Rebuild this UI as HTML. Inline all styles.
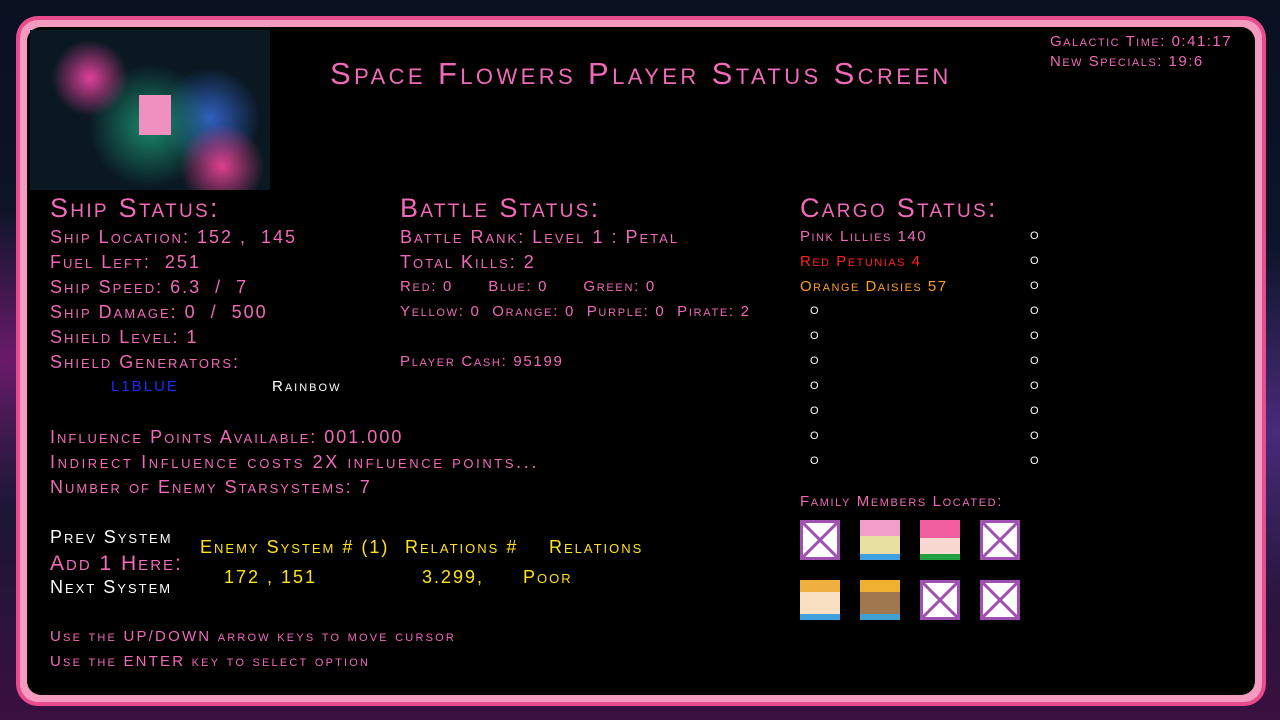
<!DOCTYPE html>
<html><head><meta charset="utf-8"><style>
body{margin:0;width:1280px;height:720px;overflow:hidden;background:radial-gradient(ellipse at 0% 50%,#6a1a6a 0,transparent 30%),radial-gradient(ellipse at 100% 60%,#4a2a7a 0,transparent 30%),linear-gradient(180deg,#0a1020,#101830 60%,#3a1040);font-family:"Liberation Sans",sans-serif;font-variant:small-caps;position:relative}
#frame{position:absolute;left:16px;top:16px;width:1250px;height:690px;border-radius:22px;background:#e84c8c}
#frame2{position:absolute;left:20px;top:20px;width:1242px;height:682px;border-radius:18px;background:#f59ac0}
#panel{position:absolute;left:27px;top:27px;width:1228px;height:668px;border-radius:14px;background:#000}
.t{position:absolute;white-space:nowrap;color:#f06ab8;font-size:18px;line-height:20px;letter-spacing:2px}
.h{font-size:27px;line-height:30px;letter-spacing:2.3px}
.s{font-size:15px;letter-spacing:2px}
.y{color:#ffe21a}
.w{color:#fff}
.o{position:absolute;color:#fff;font-size:15px;line-height:20px}
.box{position:absolute;width:34px;height:34px;border:3px solid #a050b0;background:#fff}
.pic{position:absolute;width:40px;height:40px}
</style></head><body>
<div id="frame"></div><div id="frame2"></div><div id="panel"></div>
<div style="position:absolute;left:30px;top:30px;width:240px;height:160px;background:radial-gradient(circle at 25% 30%,#e0409a 0,transparent 18%),radial-gradient(circle at 80% 85%,#e04090 0,transparent 18%),radial-gradient(circle at 50% 60%,#1a8a6a 0,transparent 40%),radial-gradient(circle at 75% 55%,#3060c0 0,transparent 25%),#0a1822"></div>
<div style="position:absolute;left:139px;top:95px;width:32px;height:40px;background:#f090c0"></div>
<div class="t h" style="left:330px;top:57px;font-size:31px;line-height:34px;letter-spacing:3.4px">Space Flowers Player Status Screen</div>
<div class="t s" style="left:1050px;top:32px;letter-spacing:1.5px">Galactic Time: 0:41:17</div>
<div class="t s" style="left:1050px;top:52px;letter-spacing:1.5px">New Specials: 19:6</div>

<div class="t h" style="left:50px;top:193px">Ship Status:</div>
<div class="t" style="left:50px;top:227px">Ship Location: 152 ,&nbsp; 145</div>
<div class="t" style="left:50px;top:252px">Fuel Left:&nbsp; 251</div>
<div class="t" style="left:50px;top:277px">Ship Speed: 6.3&nbsp; /&nbsp; 7</div>
<div class="t" style="left:50px;top:302px">Ship Damage: 0&nbsp; /&nbsp; 500</div>
<div class="t" style="left:50px;top:327px">Shield Level: 1</div>
<div class="t" style="left:50px;top:352px">Shield Generators:</div>
<div class="t s" style="left:111px;top:377px;color:#1a2aff">L1BLUE</div>
<div class="t s w" style="left:272px;top:377px">Rainbow</div>
<div class="t" style="left:50px;top:427px">Influence Points Available: 001.000</div>
<div class="t" style="left:50px;top:452px;letter-spacing:2.6px">Indirect Influence costs 2X influence points...</div>
<div class="t" style="left:50px;top:477px">Number of Enemy Starsystems: 7</div>
<div class="t w" style="left:50px;top:527px">Prev System</div>
<div class="t" style="left:50px;top:553px;font-size:21px;line-height:22px">Add 1 Here:</div>
<div class="t w" style="left:50px;top:577px">Next System</div>
<div class="t y" style="left:200px;top:537px">Enemy System # (1)</div>
<div class="t y" style="left:405px;top:537px">Relations #</div>
<div class="t y" style="left:549px;top:537px">Relations</div>
<div class="t y" style="left:224px;top:567px">172 , 151</div>
<div class="t y" style="left:422px;top:567px">3.299,</div>
<div class="t y" style="left:523px;top:567px">Poor</div>
<div class="t s" style="left:50px;top:627px;letter-spacing:2.2px">Use the UP/DOWN arrow keys to move cursor</div>
<div class="t s" style="left:50px;top:652px;letter-spacing:2.2px">Use the ENTER key to select option</div>

<div class="t h" style="left:400px;top:193px">Battle Status:</div>
<div class="t" style="left:400px;top:227px">Battle Rank: Level 1 : Petal</div>
<div class="t" style="left:400px;top:252px">Total Kills: 2</div>
<div class="t s" style="left:400px;top:277px;letter-spacing:1.7px">Red: 0&nbsp;&nbsp;&nbsp;&nbsp;&nbsp; Blue: 0&nbsp;&nbsp;&nbsp;&nbsp;&nbsp; Green: 0</div>
<div class="t s" style="left:400px;top:302px;letter-spacing:1.7px">Yellow: 0&nbsp; Orange: 0&nbsp; Purple: 0&nbsp; Pirate: 2</div>
<div class="t s" style="left:400px;top:352px;letter-spacing:1.7px">Player Cash: 95199</div>

<div class="t h" style="left:800px;top:193px">Cargo Status:</div>
<div class="t s" style="left:800px;top:227px;letter-spacing:1.5px">Pink Lillies 140</div>
<div class="t s" style="left:800px;top:252px;color:#ff2020;letter-spacing:1.5px">Red Petunias 4</div>
<div class="t s" style="left:800px;top:277px;color:#ffa020;letter-spacing:1.5px">Orange Daisies 57</div>
<div class="o" style="left:1030px;top:225px">o</div><div class="o" style="left:1030px;top:250px">o</div><div class="o" style="left:1030px;top:275px">o</div><div class="o" style="left:1030px;top:300px">o</div><div class="o" style="left:1030px;top:325px">o</div><div class="o" style="left:1030px;top:350px">o</div><div class="o" style="left:1030px;top:375px">o</div><div class="o" style="left:1030px;top:400px">o</div><div class="o" style="left:1030px;top:425px">o</div><div class="o" style="left:1030px;top:450px">o</div>
<div class="o" style="left:810px;top:300px">o</div><div class="o" style="left:810px;top:325px">o</div><div class="o" style="left:810px;top:350px">o</div><div class="o" style="left:810px;top:375px">o</div><div class="o" style="left:810px;top:400px">o</div><div class="o" style="left:810px;top:425px">o</div><div class="o" style="left:810px;top:450px">o</div>
<div class="t s" style="left:800px;top:492px;letter-spacing:1.6px">Family Members Located:</div>
<div class="box" style="left:800px;top:520px"><svg width="34" height="34"><path d="M0 0L34 34M34 0L0 34" stroke="#a050b0" stroke-width="3"/></svg></div>
<div class="pic" style="left:860px;top:520px;background:linear-gradient(#f0a0c8 40%,#e8e0a0 40%,#e8e0a0 85%,#40a0e0 85%)"></div>
<div class="pic" style="left:920px;top:520px;background:linear-gradient(#f060a0 45%,#f8d8d0 45%,#f8d8d0 85%,#20a040 85%)"></div>
<div class="box" style="left:980px;top:520px"><svg width="34" height="34"><path d="M0 0L34 34M34 0L0 34" stroke="#a050b0" stroke-width="3"/></svg></div>
<div class="pic" style="left:800px;top:580px;background:linear-gradient(#f0b040 30%,#f8e0c0 30%,#f8e0c0 85%,#40a0e0 85%)"></div>
<div class="pic" style="left:860px;top:580px;background:linear-gradient(#f0b030 30%,#a07850 30%,#a07850 85%,#40a0d0 85%)"></div>
<div class="box" style="left:920px;top:580px"><svg width="34" height="34"><path d="M0 0L34 34M34 0L0 34" stroke="#a050b0" stroke-width="3"/></svg></div>
<div class="box" style="left:980px;top:580px"><svg width="34" height="34"><path d="M0 0L34 34M34 0L0 34" stroke="#a050b0" stroke-width="3"/></svg></div>
</body></html>
